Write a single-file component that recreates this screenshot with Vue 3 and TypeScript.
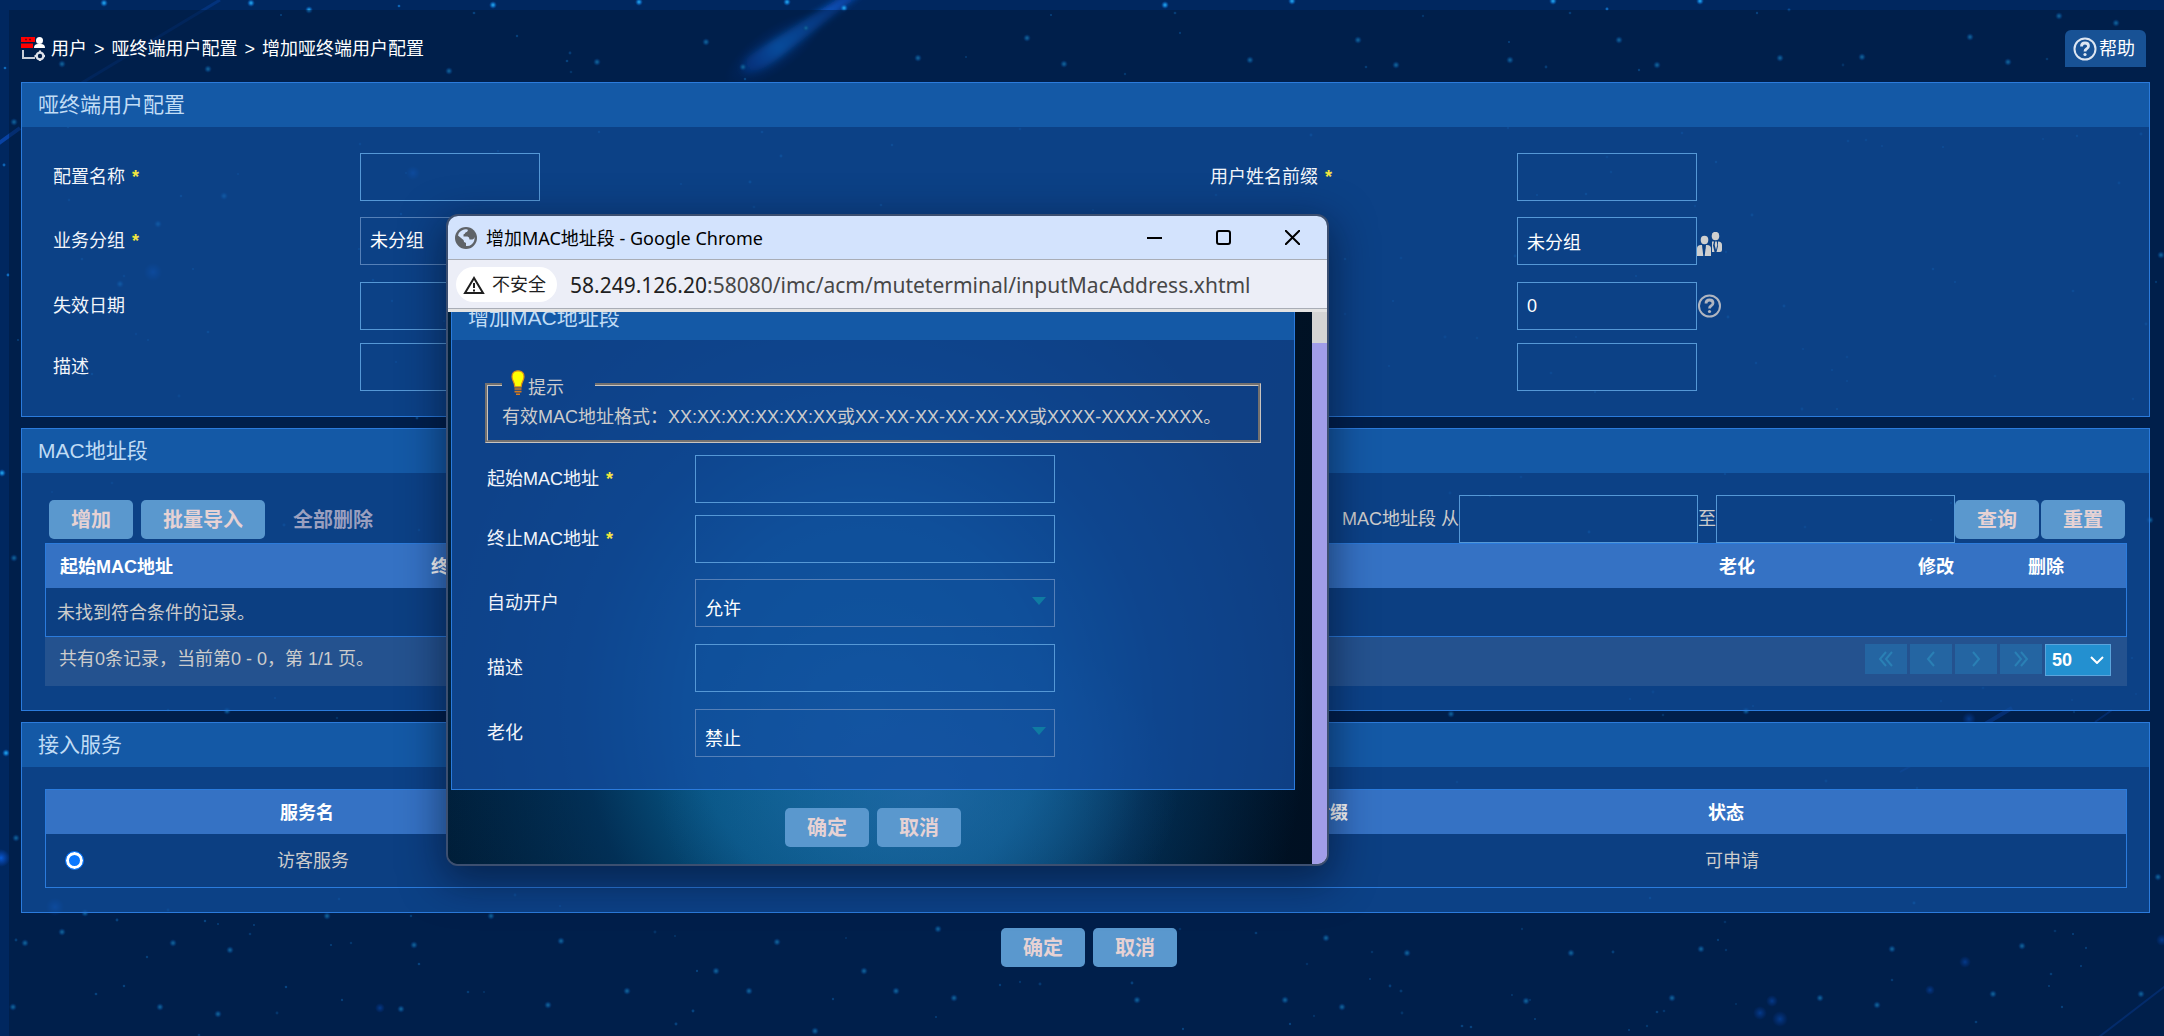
<script setup lang="ts">
import { ref } from 'vue'

interface Dot { x: number; y: number; r: number; o: number }

const bright: [number, number][] = [
  [104, 3], [251, 3], [309, 10], [493, 5], [208, 69], [449, 71], [62, 64], [639, 2], [787, 2], [597, 62],
  [706, 42], [743, 67], [806, 28], [844, 8], [918, 58], [1027, 38], [1064, 64], [1165, 5], [1292, 1],
  [1553, 1], [1700, 1], [1358, 40], [1250, 60], [1396, 65], [1510, 60], [1619, 40], [1657, 65], [1780, 58],
  [1862, 57], [2008, 62], [2059, 16], [2116, 23], [1970, 37], [2, 473], [14, 558], [14, 122], [6, 753],
  [16, 838], [85, 913], [62, 932], [25, 943], [173, 943], [230, 950], [327, 916], [414, 945], [491, 916],
  [160, 1007], [218, 1014], [401, 1009], [13, 1007], [561, 941], [627, 991], [548, 1005], [777, 942],
  [716, 971], [749, 991], [864, 971], [896, 991], [954, 998], [938, 929], [815, 1031], [1137, 1000],
  [1285, 1000], [1326, 938], [1407, 953], [1571, 953], [1526, 1001], [1342, 1007], [1701, 949],
  [1672, 998], [1820, 998], [1892, 949], [2022, 946], [1877, 1005], [1993, 994], [2141, 994], [2161, 255],
  [227, 711], [1451, 714], [1746, 711], [2158, 877], [2150, 520], [158, 224], [224, 196], [120, 284],
]

const glows: [number, number, number][] = [
  [1, 858, 9], [1965, 962, 6], [1760, 1013, 7], [1780, 1019, 8], [1930, 990, 5], [1772, 1001, 6],
  [1969, 719, 7], [380, 1008, 5], [153, 272, 9], [413, 173, 7], [55, 907, 9], [2162, 940, 6],
]

function scatter(count: number): Dot[] {
  let seed = 20731
  const next = () => {
    seed = (seed * 16807) % 2147483647
    return seed / 2147483647
  }
  return Array.from({ length: count }, () => ({
    x: Math.round(next() * 2164),
    y: Math.round(next() * 1036),
    r: 1 + next() * 0.5,
    o: 0.5 + next() * 0.5,
  }))
}

const dust = scatter(420)

const configName = ref('')
const namePrefix = ref('')
const expiry = ref('')
const description = ref('')
const serviceGroup = ref('未分组')
const userGroup = ref('未分组')
const limit = ref('0')
const extra = ref('')
const macFrom = ref('')
const macTo = ref('')
const pageSize = ref('50')
const service = ref('guest')
const startMac = ref('')
const endMac = ref('')
const autoOpen = ref('允许')
const macDescription = ref('')
const aging = ref('禁止')
</script>

<template>
  <div class="page">
    <svg class="sky" viewBox="0 0 2164 1036" preserveAspectRatio="xMinYMin slice" aria-hidden="true">
      <defs>
        <radialGradient id="glow">
          <stop offset="0" stop-color="#0a5fe0" stop-opacity=".9" />
          <stop offset="1" stop-color="#0a4fd0" stop-opacity="0" />
        </radialGradient>
        <radialGradient id="star">
          <stop offset="0" stop-color="#2cb0f0" />
          <stop offset=".4" stop-color="#1284d8" stop-opacity=".8" />
          <stop offset="1" stop-color="#0a50b0" stop-opacity="0" />
        </radialGradient>
        <linearGradient id="tail" gradientUnits="userSpaceOnUse" x1="745" y1="75" x2="860" y2="-5">
          <stop offset="0" stop-color="#0a52d8" stop-opacity=".5" />
          <stop offset=".3" stop-color="#0f78f0" />
          <stop offset="1" stop-color="#0a50c8" stop-opacity=".6" />
        </linearGradient>
        <filter id="soft" x="-30%" y="-30%" width="160%" height="160%">
          <feGaussianBlur stdDeviation="3" />
        </filter>
      </defs>
      <g stroke="#0b4fc0" stroke-width="2" fill="none">
        <path d="M-5 146 20 128" stroke-opacity=".7" stroke-width="4" />
        <path d="M80 84 220 0" stroke-opacity=".3" stroke-width="3" />
        <path d="M2095 1040 2168 984" stroke-opacity=".6" />
        <path d="M1985 724 2012 708" stroke-opacity=".7" stroke-width="4" />
        <path d="M2095 722 2112 710M1900 772 1925 758" stroke-opacity=".6" />
        <path d="M1462 660 1495 636" stroke-opacity=".8" stroke-width="8" stroke-linecap="round" filter="url(#soft)" />
      </g>
      <ellipse cx="774" cy="50" rx="58" ry="22" fill="url(#glow)" opacity=".6" transform="rotate(-35 774 50)" />
      <path d="M743 72q-4-10 12-20L848-8h16L776 60q-22 16-33 12z" fill="url(#tail)" filter="url(#soft)" />
      <circle v-for="(d, i) in dust" :key="'d' + i" :cx="d.x" :cy="d.y" :r="d.r" :opacity="d.o" fill="#0f6cc0" />
      <circle v-for="(b, i) in bright" :key="'b' + i" :cx="b[0]" :cy="b[1]" r="4" fill="url(#star)" />
      <circle v-for="(g, i) in glows" :key="'g' + i" :cx="g[0]" :cy="g[1]" :r="g[2]" fill="url(#glow)" />
    </svg>

    <main class="shell">
      <header class="topbar">
        <nav class="crumbs" aria-label="位置">
          <svg width="24" height="24" viewBox="0 0 24 24" aria-hidden="true">
            <path d="M0 0h14v5H0zM0 6.500h12v4.500H0z" fill="#f00" />
            <path d="M4 2.500h2M8 2.500h2" stroke="#7c0010" stroke-width="1.500" />
            <circle cx="18.500" cy="3.500" r="3.500" fill="#fff" />
            <path d="M13 11q0-4 4-4h3q4 0 4 4z" fill="#fff" />
            <path d="M2 13v8h12" fill="none" stroke="#c9ced8" stroke-width="2" />
            <circle cx="19" cy="19" r="3.400" fill="none" stroke="#dfe3ea" stroke-width="2.400" />
            <path d="M19 13.500v2M19 22.500v2M13.500 19h2M22.500 19h2" stroke="#dfe3ea" stroke-width="2" />
          </svg>
          <a href="#">用户</a><span>&gt;</span><a href="#">哑终端用户配置</a><span>&gt;</span><span>增加哑终端用户配置</span>
        </nav>
        <button class="help" type="button">
          <svg width="24" height="24" viewBox="0 0 24 24" aria-hidden="true">
            <circle cx="12" cy="12" r="10.500" fill="none" stroke="#dde6f2" stroke-width="2" />
            <path d="M8.500 9.500q0-3.500 3.500-3.500t3.500 3q0 1.800-1.800 2.800T12 14.500" fill="none" stroke="#dde6f2" stroke-width="2.800" />
            <circle cx="12" cy="17.500" r="1.600" fill="#dde6f2" />
          </svg>帮助
        </button>
      </header>

      <section class="panel">
        <h2>哑终端用户配置</h2>
        <div class="form">
          <label for="cfg-name">配置名称<b>*</b></label>
          <div><input id="cfg-name" v-model="configName" class="field" type="text"></div>
          <label for="cfg-prefix">用户姓名前缀<b>*</b></label>
          <div><input id="cfg-prefix" v-model="namePrefix" class="field" type="text"></div>

          <label for="cfg-group">业务分组<b>*</b></label>
          <div>
            <select id="cfg-group" v-model="serviceGroup" class="field dim"><option>未分组</option></select>
          </div>
          <span></span>
          <div>
            <input v-model="userGroup" class="field" type="text" aria-label="用户分组">
            <svg class="after people" width="25" height="24" viewBox="0 0 25 24" aria-hidden="true">
              <g fill="#cfcfcf">
                <ellipse cx="18.500" cy="4" rx="3.800" ry="4.200" />
                <path d="M15 9.500h2l-1 4 1.500 6.500H15zM21 9.500q4 0 4 3.500v5q0 2-2 2h-3.500l1.500-6z" />
                <path d="M18.200 9.500h1.600l.5 3.500-1.300 5-1.300-5z" />
                <ellipse cx="7.500" cy="8" rx="3.800" ry="4.200" />
                <path d="M5 13H4q-4 0-4 3.500V24h6.300zM9 13h1q4 0 4 3.500V24H7.700z" />
                <path d="M6.400 13h1.400l.5 3L7 21l-1.200-5z" fill="#0d4082" />
              </g>
            </svg>
          </div>

          <label for="cfg-expiry">失效日期</label>
          <div><input id="cfg-expiry" v-model="expiry" class="field" type="text"></div>
          <span></span>
          <div>
            <input v-model="limit" class="field" type="text" aria-label="在线数量限制">
            <svg class="after" width="24" height="24" viewBox="0 0 24 24" aria-hidden="true">
              <circle cx="12.500" cy="12" r="10.500" fill="none" stroke="#b0b5c0" stroke-width="2" />
              <path d="M9 9.500q0-3.500 3.500-3.500t3.500 3q0 1.800-1.800 2.800t-1.700 2.700" fill="none" stroke="#b0b5c0" stroke-width="2.800" />
              <circle cx="12.500" cy="17.500" r="1.600" fill="#b0b5c0" />
            </svg>
          </div>

          <label for="cfg-desc">描述</label>
          <div><input id="cfg-desc" v-model="description" class="field" type="text"></div>
          <span></span>
          <div><input v-model="extra" class="field" type="text" aria-label="备注"></div>
        </div>
      </section>

      <section class="panel">
        <h2>MAC地址段</h2>
        <div class="body">
          <div class="tools">
            <div class="actions">
              <button class="btn" type="button">增加</button>
              <button class="btn" type="button">批量导入</button>
              <button class="btn off" type="button" disabled>全部删除</button>
            </div>
            <div class="search">
              <label for="mac-from">MAC地址段 从</label>
              <input id="mac-from" v-model="macFrom" class="field mid" type="text">
              <label for="mac-to">至</label>
              <input id="mac-to" v-model="macTo" class="field mid" type="text">
              <div class="pair">
                <button class="btn" type="button">查询</button>
                <button class="btn" type="button">重置</button>
              </div>
            </div>
          </div>
          <table>
            <colgroup><col class="w371"><col><col class="w199"><col class="w110"><col class="w112"></colgroup>
            <thead>
              <tr><th>起始MAC地址</th><th>终止MAC地址</th><th>老化</th><th>修改</th><th>删除</th></tr>
            </thead>
            <tbody>
              <tr><td colspan="5">未找到符合条件的记录。</td></tr>
            </tbody>
          </table>
          <div class="pager">
            <span>共有0条记录，当前第0 - 0，第 1/1 页。</span>
            <div class="pages">
              <button type="button" aria-label="首页" disabled>
                <svg width="16" height="16" viewBox="0 0 16 16"><path d="M8 1 2 8l6 7M14 1 8 8l6 7" /></svg>
              </button>
              <button type="button" aria-label="上一页" disabled>
                <svg width="16" height="16" viewBox="0 0 16 16"><path d="M11 1 5 8l6 7" /></svg>
              </button>
              <button type="button" aria-label="下一页" disabled>
                <svg width="16" height="16" viewBox="0 0 16 16"><path d="M5 1l6 7-6 7" /></svg>
              </button>
              <button type="button" aria-label="末页" disabled>
                <svg width="16" height="16" viewBox="0 0 16 16"><path d="M2 1l6 7-6 7M8 1l6 7-6 7" /></svg>
              </button>
              <div class="size">
                <select v-model="pageSize" aria-label="每页条数"><option>50</option></select>
                <svg width="14" height="8" viewBox="0 0 14 8" aria-hidden="true"><path d="M1 1l6 6 6-6" /></svg>
              </div>
            </div>
          </div>
        </div>
      </section>

      <section class="panel">
        <h2>接入服务</h2>
        <div class="body">
          <table class="services">
            <colgroup><col class="w220"><col><col class="w432"><col class="w432"></colgroup>
            <thead>
              <tr><th></th><th>服务名</th><th>服务后缀</th><th>状态</th></tr>
            </thead>
            <tbody>
              <tr>
                <td class="pick"><input v-model="service" type="radio" value="guest" aria-label="访客服务"></td>
                <td>访客服务</td><td></td><td>可申请</td>
              </tr>
            </tbody>
          </table>
        </div>
      </section>

      <div class="confirm">
        <button class="btn" type="button">确定</button>
        <button class="btn" type="button">取消</button>
      </div>
    </main>

    <div class="window" role="dialog" aria-label="增加MAC地址段">
      <div class="titlebar">
        <svg width="22" height="22" viewBox="0 0 22 22" aria-hidden="true">
          <circle cx="11" cy="11" r="11" fill="#5f6368" />
          <path d="M3 8.500Q4 4 9 2.600q3-.8 4 .4-.500 2-2.500 2.500-.5 1.500-2 2v2h4q2 .5 2 3h3q1.500-.5 2-2.500.500 5-3 7.500-2.500 2-5.500 1.500v-3q-2.500-.5-2.500-3z" fill="#d3e3fd" />
        </svg>
        <span class="name">增加MAC地址段 - Google Chrome</span>
        <div class="controls">
          <button type="button" aria-label="最小化">
            <svg width="15" height="15" viewBox="0 0 15 15"><path d="M0 8h15" /></svg>
          </button>
          <button type="button" aria-label="最大化">
            <svg width="15" height="15" viewBox="0 0 15 15"><rect x="1" y="1" width="13" height="13" rx="2" /></svg>
          </button>
          <button type="button" aria-label="关闭">
            <svg width="15" height="15" viewBox="0 0 15 15"><path d="M0 0l15 15M15 0 0 15" /></svg>
          </button>
        </div>
      </div>
      <div class="address">
        <span class="chip">
          <svg width="22" height="18" viewBox="0 0 22 18" aria-hidden="true">
            <path d="M11 2 2 17h18z" fill="none" stroke="#1f1f1f" stroke-width="2" />
            <path d="M11 7v5M11 13.500v2" stroke="#1f1f1f" stroke-width="2" />
          </svg>不安全
        </span>
        <span class="url"><em>58.249.126.20</em>:58080/imc/acm/muteterminal/inputMacAddress.xhtml</span>
      </div>
      <div class="viewport">
        <div class="inner">
          <section class="panel">
            <h2>增加MAC地址段</h2>
            <div class="sheet">
              <fieldset>
                <legend>
                  <svg width="14" height="26" viewBox="0 0 14 26" aria-hidden="true">
                    <path d="M7 .8c4 0 6 2.400 6 6 0 4-2.600 5-2.800 10H3.800C3.600 11.800 1 10.800 1 6.800c0-3.600 2-6 6-6z" fill="#ff0" stroke="#d98a1c" stroke-width="1.200" />
                    <path d="M3.500 19h7M3.500 21.600h7M5 24.200h4" stroke="#d77a1c" stroke-width="1.600" />
                  </svg><span>提示</span>
                </legend>
                <p>有效MAC地址格式：XX:XX:XX:XX:XX:XX或XX-XX-XX-XX-XX-XX或XXXX-XXXX-XXXX。</p>
              </fieldset>
              <div class="rows">
                <label for="mac-start">起始MAC地址<b>*</b></label>
                <input id="mac-start" v-model="startMac" class="field wide" type="text">
                <label for="mac-end">终止MAC地址<b>*</b></label>
                <input id="mac-end" v-model="endMac" class="field wide" type="text">
                <label for="mac-auto">自动开户</label>
                <div class="drop">
                  <select id="mac-auto" v-model="autoOpen" class="field wide dim"><option>允许</option><option>禁止</option></select>
                </div>
                <label for="mac-desc">描述</label>
                <input id="mac-desc" v-model="macDescription" class="field wide" type="text">
                <label for="mac-aging">老化</label>
                <div class="drop">
                  <select id="mac-aging" v-model="aging" class="field wide dim"><option>禁止</option><option>允许</option></select>
                </div>
              </div>
            </div>
          </section>
          <div class="confirm">
            <button class="btn" type="button">确定</button>
            <button class="btn" type="button">取消</button>
          </div>
        </div>
        <div class="track"><div class="thumb"></div></div>
      </div>
    </div>
  </div>
</template>

<style>
body {
  margin: 0;
  background: #00265f;
}
</style>

<style scoped>
* {
  box-sizing: border-box;
}

.page {
  position: relative;
  min-height: 100vh;
  display: flex;
  padding: 10px 0 0 9px;
  overflow: hidden;
  background: #00275f;
  color: #ccc;
  font: 18px/24px "Liberation Sans", "Noto Sans CJK SC", sans-serif;
}

.sky {
  position: absolute;
  inset: 0;
  width: 100%;
  height: 100%;
}

.shell {
  position: relative;
  flex: 1;
  min-width: 0;
  padding: 0 14px 0 12px;
  background: rgba(0, 22, 52, 0.46);
}

button,
input,
select {
  font: inherit;
  color: inherit;
}

.topbar {
  display: flex;
  justify-content: space-between;
  align-items: center;
  padding: 20px 4px 15px 0;
}

.crumbs {
  display: flex;
  align-items: center;
  gap: 7px;
  color: #fff;
}

.crumbs svg {
  margin-right: -1px;
}

.crumbs a {
  color: inherit;
  text-decoration: none;
}

.help {
  display: flex;
  align-items: center;
  gap: 2px;
  width: 81px;
  height: 37px;
  padding: 0 0 0 8px;
  border: 0;
  border-radius: 6px 6px 0 0;
  background: #185295;
  color: #fff;
}

.panel {
  margin-bottom: 11px;
  border: 1px solid #2b7bdc;
  background: rgba(18, 84, 166, 0.66);
}

.panel h2 {
  margin: 0;
  height: 44px;
  padding-left: 16px;
  background: #1459a6;
  color: #c0dcf5;
  font-size: 21px;
  font-weight: 400;
  line-height: 44px;
}

.form {
  display: grid;
  grid-template-columns: 307fr 850fr 307fr 610fr;
  grid-template-rows: 64px 65px 61px 48px;
  padding: 26px 22px 25px 31px;
}

.form > div {
  display: flex;
  height: 48px;
}

label {
  line-height: 48px;
  white-space: nowrap;
}

.form label,
.rows label {
  color: #f2f5fa;
}

label b {
  margin-left: 7px;
  color: #f2e640;
}

.field {
  width: 180px;
  height: 48px;
  padding: 0 9px;
  border: 1px solid #5598d6;
  border-radius: 0;
  outline: 0;
  appearance: none;
  background: transparent;
  color: #fff;
}

.field.dim {
  border-color: #5580b8;
}

.field.mid {
  width: 239px;
}

.field.wide {
  width: 360px;
}

.after {
  align-self: center;
}

.people {
  margin-top: 6px;
}

.body {
  padding: 22px 22px 24px 23px;
}

.tools {
  display: flex;
  justify-content: space-between;
  align-items: flex-end;
}

.actions {
  display: flex;
  gap: 8px;
  padding: 0 0 4px 4px;
}

.search {
  display: flex;
  align-items: flex-end;
  padding-right: 2px;
}

.pair {
  display: flex;
  gap: 2px;
  padding-bottom: 4px;
}

.btn {
  min-width: 84px;
  height: 39px;
  padding: 0 22px;
  border: 0;
  border-radius: 5px;
  background: #5a98ce;
  color: #e6d2d4;
  font-size: 20px;
  font-weight: 700;
}

.btn.off {
  padding: 0 20px;
  background: transparent;
  color: #9a9fbf;
}

table {
  width: 100%;
  table-layout: fixed;
  border: 1px solid #2b7bdc;
  border-spacing: 0;
  background: #0c3f82;
}

th {
  height: 44px;
  padding: 2px 0 0 14px;
  background: #3572c4;
  color: #fff;
  text-align: left;
}

td {
  height: 48px;
  padding: 2px 0 0 11px;
}

.services td {
  height: 53px;
  padding-top: 0;
}

.w110 {
  width: 110px;
}

.w112 {
  width: 112px;
}

.w199 {
  width: 199px;
}

.w220 {
  width: 220px;
}

.w371 {
  width: 371px;
}

.w432 {
  width: 432px;
}

.services .pick {
  padding-left: 19px;
}

.pick input {
  display: block;
  width: 19px;
  height: 19px;
  margin: 0;
  appearance: none;
  border: 1px solid #0a78ff;
  border-radius: 50%;
  background: #0a78ff;
  box-shadow: inset 0 0 0 3px #fff;
}

.pager {
  display: flex;
  justify-content: space-between;
  height: 49px;
  padding: 0 16px 0 14px;
  background: #24528f;
  line-height: 44px;
}

.pages {
  display: flex;
  align-items: flex-start;
  gap: 3px;
  padding-top: 7px;
}

.pages button {
  display: grid;
  place-items: center;
  width: 42px;
  height: 30px;
  padding: 0;
  border: 0;
  background: #2465a2;
}

.pages button svg {
  fill: none;
  stroke: #2a80b5;
  stroke-width: 2;
}

.size {
  display: grid;
  grid-template-rows: 32px;
  width: 66px;
}

.size > * {
  grid-area: 1 / 1;
}

.size select {
  height: 32px;
  padding: 0 6px;
  border: 1px solid #5aa4dc;
  border-radius: 0;
  appearance: none;
  background: #2390d0;
  color: #fff;
  font-weight: 700;
  line-height: 24px;
}

.size svg {
  place-self: center end;
  margin-right: 7px;
  fill: none;
  stroke: #fff;
  stroke-width: 2;
  pointer-events: none;
}

.confirm {
  display: flex;
  justify-content: center;
  gap: 8px;
  padding: 4px 0 0 7px;
}

.window {
  position: absolute;
  left: 446px;
  top: 214px;
  display: flex;
  flex-direction: column;
  width: 883px;
  height: 652px;
  overflow: hidden;
  border: 2px solid #3c4f70;
  border-radius: 12px;
  background: #001a33;
  box-shadow: 0 12px 40px 4px rgba(0, 10, 30, 0.5);
}

.titlebar {
  display: flex;
  align-items: center;
  height: 44px;
  padding-left: 7px;
  border-bottom: 1px solid #a9adb6;
  background: #d3e3fd;
  color: #000;
}

.name {
  margin-left: 9px;
  font-family: "Noto Sans", "Noto Sans CJK SC", sans-serif;
}

.controls {
  display: flex;
  margin-left: auto;
}

.controls button {
  display: grid;
  place-items: center;
  width: 69px;
  height: 43px;
  padding: 0;
  border: 0;
  background: none;
}

.controls svg {
  fill: none;
  stroke: #000;
  stroke-width: 2;
}

.address {
  display: flex;
  align-items: center;
  gap: 13px;
  height: 52px;
  padding-left: 8px;
  border-bottom: 3px solid #e3e3e3;
  background: #eceef7;
  box-shadow: inset 0 -1px #a9adb6;
}

.chip {
  display: flex;
  align-items: center;
  gap: 7px;
  height: 35px;
  padding: 0 11px 0 7px;
  border-radius: 18px;
  background: #fff;
  color: #1f1f1f;
}

.url {
  color: #474747;
  font-family: "Noto Sans", sans-serif;
  font-size: 21px;
}

.url em {
  color: #1f1f1f;
  font-style: normal;
}

.viewport {
  display: flex;
  flex: 1;
  min-height: 0;
}

.inner {
  flex: 1;
  overflow: hidden;
  padding: 0 17px 0 3px;
  background:
    radial-gradient(ellipse 260px 180px at 470px 480px, rgba(36, 104, 170, 0.7), transparent),
    radial-gradient(ellipse 440px 480px at 420px 400px, #0a6a96 0%, #075684 40%, rgba(3, 56, 100, 0.7) 65%, transparent),
    linear-gradient(100deg, #00203c, #001022);
}

.inner .panel {
  margin: -17px 0 14px;
  background: rgba(18, 78, 162, 0.76);
}

.inner .confirm {
  padding-left: 0;
}

.sheet {
  padding: 30px 33px 32px;
}

fieldset {
  margin: 0 0 12px;
  padding: 0 14px 11px;
  border: 3px groove #c8c4c0;
}

legend {
  display: flex;
  gap: 3px;
  height: 29px;
  padding: 0 31px 0 9px;
}

legend span {
  padding-top: 6px;
}

fieldset p {
  margin: 0;
  padding-top: 6px;
  white-space: nowrap;
}

.rows {
  display: grid;
  grid-template-columns: 208px 1fr;
  grid-template-rows: 60px 64px 65px 65px 48px;
  padding-left: 2px;
}

.drop {
  position: relative;
  width: 360px;
  height: 48px;
}

.drop select {
  padding-top: 11px;
}

.drop::after {
  content: "";
  position: absolute;
  right: 9px;
  top: 18px;
  border: 7px solid transparent;
  border-top: 8px solid #0f7ba2;
  border-bottom: 0;
  pointer-events: none;
}

.track {
  width: 15px;
  padding-top: 31px;
  background: #d4d4d4;
}

.thumb {
  height: 100%;
  background: #a19de8;
}
</style>
